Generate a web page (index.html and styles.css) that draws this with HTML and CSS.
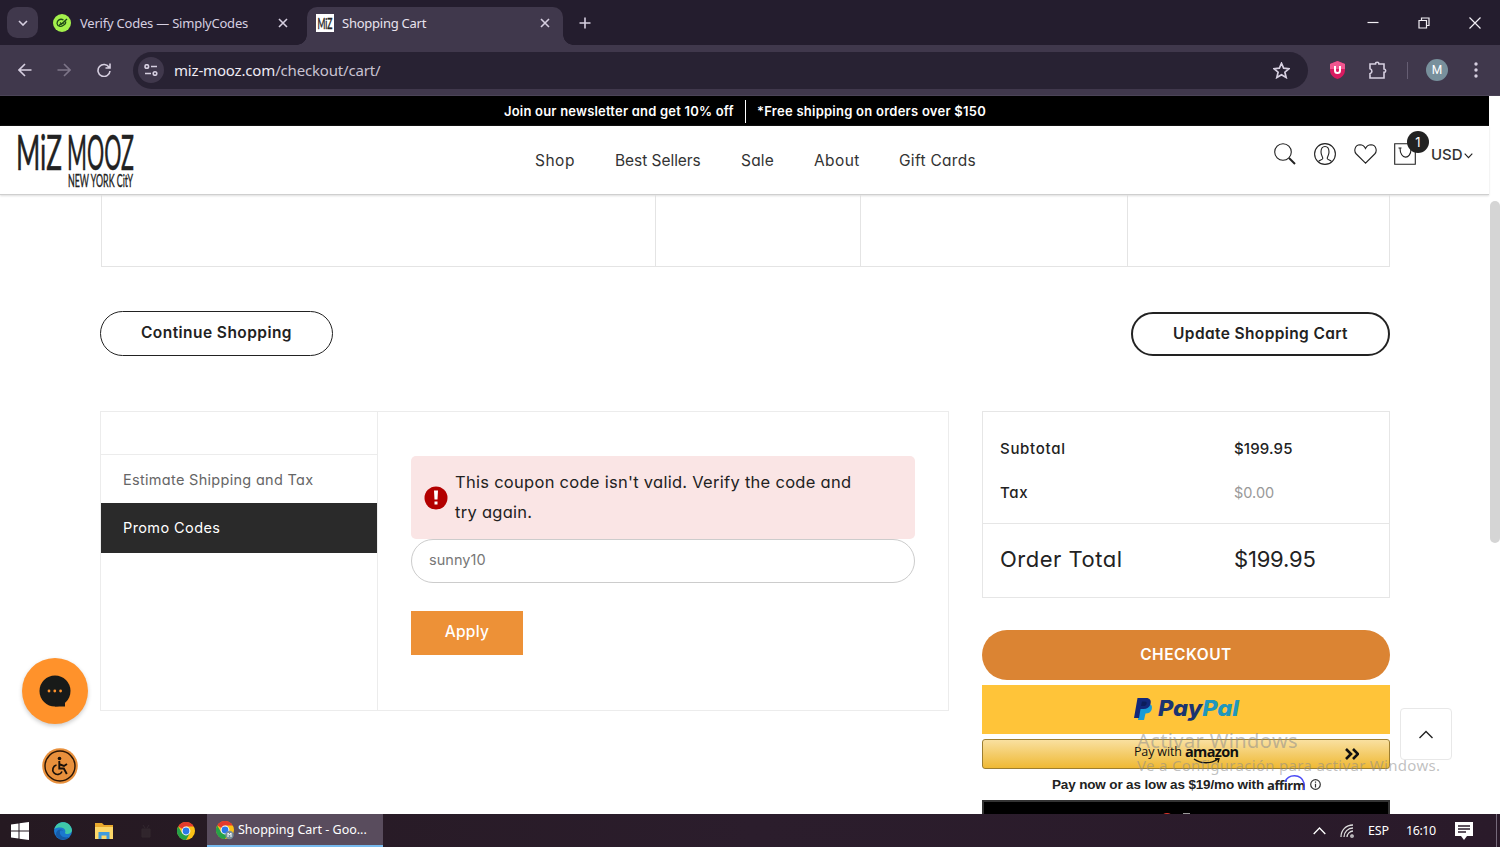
FILE: index.html
```html
<!DOCTYPE html>
<html lang="en">
<head>
<meta charset="utf-8">
<title>Shopping Cart</title>
<link rel="stylesheet" href="styles.css">
</head>
<body>
<svg class="defs" width="0" height="0">
  <symbol id="chrome" viewBox="0 0 18 18">
    <circle cx="9" cy="9" r="9" fill="#fbc116"/>
    <path d="M9 9 1.2 4.5A9 9 0 0 1 16.8 4.5L9 4.6Z" fill="#e33b2e"/>
    <path d="M1.2 4.5A9 9 0 0 0 9 18L12.8 11.2 9 13 5.2 11.2Z" fill="#26a148"/>
    <circle cx="9" cy="9" r="4.4" fill="#fff"/><circle cx="9" cy="9" r="3.4" fill="#2b79e8"/>
  </symbol>
</svg>
<div class="tabs">
  <div class="tab-search"><svg width="10" height="6" viewBox="0 0 10 6"><path d="m1 1 4 4 4-4"/></svg></div>
  <div class="tab tab-one">
    <svg class="fav" viewBox="0 0 18 18"><circle cx="9" cy="9" r="9" fill="#a4f14c"/><path d="M10.500 6C7 4 4 6.500 4 9.500c.5 3 4 3.500 6 2 2-1 3-2.500 2.500-4M7 8.500l1.500 1.500L14 5M6 11l5-2" fill="none" stroke="#1e4a17" stroke-width="1.300"/></svg>
    <span class="tx tab-a">Verify Codes — SimplyCodes</span>
    <svg class="x" viewBox="0 0 10 10"><path d="m1 1 8 8M9 1 1 9"/></svg>
  </div>
  <div class="tab tab-two">
    <svg class="fav" viewBox="0 0 18 18"><path fill="#fff" d="M0 0h18v18H0z"/><text x="1.500" y="14.500" textLength="15" lengthAdjust="spacingAndGlyphs" font-family="Lato" font-size="15" fill="#222" stroke="#222" stroke-width=".4">MiZ</text></svg>
    <span class="tx tab-b">Shopping Cart</span>
    <svg class="x" viewBox="0 0 10 10"><path d="m1 1 8 8M9 1 1 9"/></svg>
  </div>
  <svg class="plus" viewBox="0 0 12 12"><path d="M6 .5v11M.5 6h11"/></svg>
  <div class="win">
    <svg width="12" height="12" viewBox="0 0 12 12"><path d="M.5 5.500h11"/></svg>
    <svg width="12" height="12" viewBox="0 0 12 12"><path d="M1 3.500h7.500V11H1zM3.500 3.500V1H11v7.500H8.500"/></svg>
    <svg width="12" height="12" viewBox="0 0 12 12"><path d="m.5.500 11 11m0-11-11 11"/></svg>
  </div>
</div>
<div class="toolbar">
  <svg class="nav-i back" viewBox="0 0 14 14"><path d="M13.500 7H1.500M7 1 1 7l6 6"/></svg>
  <svg class="nav-i fwd" viewBox="0 0 14 14"><path d="M.5 7h12M7 1l6 6-6 6"/></svg>
  <svg class="nav-i" viewBox="0 0 14 14"><path d="M12.200 4.500A6 6 0 1 0 13 8M13 .5V5H8.500"/></svg>
  <div class="omni">
    <div class="site"><svg width="14" height="12" viewBox="0 0 14 12"><circle cx="2.800" cy="2.500" r="1.800"/><path d="M7 2.500h6M1 9.500h6"/><circle cx="11" cy="9.500" r="1.800"/></svg></div>
    <span class="tx url"><b>miz-mooz.com</b>/checkout/cart/</span>
    <svg class="star" viewBox="0 0 16 16"><path d="m8 1.200 2 4.600 5 .5-3.800 3.300 1.200 5L8 12l-4.400 2.600 1.200-5L1 6.300l5-.5z"/></svg>
  </div>
  <svg class="shield" viewBox="0 0 15 18"><path d="M7.500 0 15 3v6c0 5-4 8-7.500 9C4 17 0 14 0 9V3z" fill="#d81b60"/><path d="M7.500 0 15 3v5H0V3z" fill="#f0568f"/><path d="M5 5v4.500a2.500 2.500 0 0 0 5 0V5" fill="none" stroke="#fff" stroke-width="2"/></svg>
  <svg class="puzzle" viewBox="0 0 18 18"><path d="M1 3h5.500a1.700 1.700 0 0 1 3.400 0H15v5a1.700 1.700 0 0 1 0 3.400V17H1v-4.300a2.600 2.600 0 0 0 0-5z"/></svg>
  <i class="sep"></i>
  <div class="avatar">M</div>
  <svg class="dots" viewBox="0 0 4 16"><circle cx="2" cy="2" r="1.700"/><circle cx="2" cy="8" r="1.700"/><circle cx="2" cy="14" r="1.700"/></svg>
</div>

<div class="view">
<div class="page">
  <div class="banner"><span class="tx ban-a">Join our newsletter and get 10% off</span><i></i><span class="tx ban-b">*Free shipping on orders over $150</span></div>
  <header class="head">
    <svg class="logo" width="118" height="56" viewBox="0 0 118 56">
      <text x="0" y="37.500" textLength="46" lengthAdjust="spacingAndGlyphs" class="logo-big">MiZ</text>
      <text x="51" y="37.500" textLength="67" lengthAdjust="spacingAndGlyphs" class="logo-big">MOOZ</text>
      <text x="52" y="54.500" textLength="65" lengthAdjust="spacingAndGlyphs" class="logo-small">NEW YORK CitY</text>
    </svg>
    <nav class="menu">
      <span class="tx m1">Shop</span><span class="tx m2">Best Sellers</span><span class="tx m3">Sale</span><span class="tx m4">About</span><span class="tx m5">Gift Cards</span>
    </nav>
    <div class="tools">
      <svg width="22" height="22" viewBox="0 0 22 22"><circle cx="9" cy="9" r="8.300"/><path d="m15 15 6 6" stroke-width="2"/></svg>
      <svg width="22" height="22" viewBox="0 0 22 22"><circle cx="11" cy="11" r="10.400"/><path d="M4.500 18.500c1-1.500 4-1.500 4.300-3 .2-1.500-1.800-3-1.800-6.500C7 5.500 8.500 3.500 11 3.500S15 5.500 15 9c0 3.500-2 5-1.800 6.500.3 1.500 3.300 1.500 4.300 3"/></svg>
      <svg width="23" height="20" viewBox="0 0 23 20"><path d="M11.500 19.200 2.300 10C-.5 7 .8 1 6 .8c3 0 4.500 1.700 5.500 3.700C12.500 2.500 14 .8 17 .8c5.200.2 6.500 6.200 3.700 9.200z"/></svg>
      <div class="bag"><svg width="22" height="22" viewBox="0 0 22 22"><path d="M.7.700h20.600v20.600H.7zM4.500 5h3M6 5c0 12 11 12 11 1"/></svg><b>1</b></div>
      <span class="tx usd">USD</span>
      <svg class="chev" width="9" height="6" viewBox="0 0 9 6"><path d="m.7.700 3.800 4L8.300.7"/></svg>
    </div>
  </header>
  <main>
    <div class="cells"><i></i><i></i><i></i><i></i></div>
    <div class="actions">
      <button class="pill"><span class="tx cont">Continue Shopping</span></button>
      <button class="pill thick"><span class="tx upd">Update Shopping Cart</span></button>
    </div>
    <div class="cols">
      <section class="promo">
        <ul>
          <li class="blank"></li>
          <li><span class="tx est">Estimate Shipping and Tax</span></li>
          <li class="on"><span class="tx pro">Promo Codes</span></li>
        </ul>
        <div class="form">
          <div class="alert"><svg width="24" height="24" viewBox="0 0 24 24"><circle cx="12" cy="12" r="11.500" fill="#b30000"/><path d="M10 4.500h4l-.5 9h-3zM10.500 15.500h3v3h-3z" fill="#fff"/></svg>
            <p><span class="tx al">This coupon code isn't valid. Verify the code and</span><br><span class="tx al">try again.</span></p></div>
          <div class="input"><span class="tx inp">sunny10</span></div>
          <button class="apply"><span class="tx app">Apply</span></button>
        </div>
      </section>
      <aside>
        <div class="totals">
          <div class="row"><span><span class="tx sub">Subtotal</span></span><span><span class="tx s1">$199.95</span></span></div>
          <div class="row"><span><span class="tx tax">Tax</span></span><span class="dim"><span class="tx s2">$0.00</span></span></div>
          <div class="row grand"><span><span class="tx ord">Order Total</span></span><span><span class="tx s3">$199.95</span></span></div>
        </div>
        <button class="checkout"><span class="tx chk">CHECKOUT</span></button>
        <div class="paypal">
          <svg width="19" height="22" viewBox="0 0 19 22"><path d="M6 6h9c3 .5 3.500 3 2.500 6-1 2.500-3 3.500-6 3.500L10 22H4z" fill="#179bd7"/><path d="M3.500 0H12c4 0 5.500 2.500 4.500 6-1 3.500-3.500 5-7 5H6.500L5 20H0z" fill="#12287a"/><path d="M8 3.500h3c1.500 0 2 1 1.500 2.500S11 8 9.500 8H7z" fill="#0b1d5c"/></svg>
          <svg class="pp" width="83" height="26" viewBox="0 0 83 26"><text x="0" y="19.500" textLength="81" lengthAdjust="spacingAndGlyphs">Pay<tspan>Pal</tspan></text></svg>
        </div>
        <div class="amazon"><span class="tx az1">Pay with</span><span class="az"><span class="tx az2">amazon</span><svg width="30" height="8" viewBox="0 0 30 8"><path d="M1 1c7 5 17 5 24 0M22 .8l4-.3-1 4"/></svg></span>
          <svg class="dbl" width="14" height="12" viewBox="0 0 14 12"><path d="m1 1 5 5-5 5m7-10 5 5-5 5"/></svg></div>
        <div class="affirm"><span class="tx af1">Pay now or as low as $19/mo with</span><span class="af"><span class="tx af2">affirm</span><svg width="22" height="16" viewBox="0 0 22 16"><path d="M1 7C4-1 17-2 20 8c.5 2 0 5-.5 7"/></svg></span>
          <svg class="info" width="11" height="11" viewBox="0 0 11 11"><circle cx="5.500" cy="5.500" r="4.800"/><path d="M5.500 2.500v1.300m0 1v3.700"/></svg></div>
        <div class="black"><i></i><b></b></div>
      </aside>
    </div>
  </main>
</div>
<div class="scroll"><i></i></div>
<div class="chat"><svg width="32" height="32" viewBox="0 0 32 32"><circle cx="16" cy="16" r="15.500" fill="#181a19"/><path d="M18 24h8v7.500H16z" fill="#181a19"/><g fill="#ff922b"><circle cx="10" cy="16" r="1.400"/><circle cx="15.800" cy="16" r="1.400"/><circle cx="21.600" cy="16" r="1.400"/></g></svg></div>
<div class="access"><svg width="36" height="36" viewBox="0 0 36 36"><circle cx="18" cy="18" r="17.800" fill="#e8903c"/><circle cx="18" cy="18" r="15" fill="none" stroke="#2a1606" stroke-width="1.400"/><circle cx="17.500" cy="10.500" r="1.800" fill="#18100a"/><path d="M17.300 13v7.500h4.500l3 5.500M18 16.500l4 1.500 3-2" fill="none" stroke="#18100a" stroke-width="1.900"/><path d="M14.500 17a4.800 4.800 0 1 0 5.500 6.500" fill="none" stroke="#18100a" stroke-width="1.700"/></svg></div>
<div class="top"><svg width="16" height="9" viewBox="0 0 16 9"><path d="m1.500 8 6.500-6.500L14.500 8"/></svg></div>
<div class="mark"><p><span class="tx w1">Activar Windows</span></p><p class="sm"><span class="tx w2">Ve a Configuración para activar Windows.</span></p></div>
</div>

<div class="task">
  <svg class="start" viewBox="0 0 18 18"><path d="M0 2.500 7.500 1.500V8.500H0zM8.500 1.300 18 0V8.500H8.500zM0 9.500H7.500V16.500L0 15.500zM8.500 9.500H18V18L8.500 16.700z"/></svg>
  <svg class="t2" viewBox="0 0 18 18"><circle cx="9" cy="9" r="9" fill="#1b78cf"/><path d="M.5 7C2-1.500 16-3 18 8c0 4-6 5-7 3 2-5-5-7-10.500-4" fill="#3fc8a9"/><path d="M6 9c-1 5 4 7.500 9 6-5 5-13 2-13-3 0-4 5-6 7-3-1.500-1-2.500-1-3 0" fill="#155ba8"/></svg>
  <svg class="t3" viewBox="0 0 18 16"><path d="M0 0h7l2 2h9v4H0z" fill="#e8a92d"/><path d="M0 4h18v12H0z" fill="#fbd768"/><path d="M3.500 16V9h11v7h-3v-3.500h-5V16z" fill="#3f9bdc"/></svg>
  <svg class="t4" viewBox="0 0 12 14"><path d="M2 5h8v8H2zM3 1l2 3m4-3L7 4" /></svg>
  <svg class="t5"><use href="#chrome"/></svg>
  <div class="active"><svg><use href="#chrome"/><circle cx="13.500" cy="14" r="4.200" fill="#78909c"/><path d="M12 16v-4l1.500 2 1.500-2v4" fill="none" stroke="#fff"/></svg><span class="tx tk">Shopping Cart - Goo...</span></div>
  <div class="tray">
    <svg width="13" height="8" viewBox="0 0 13 8"><path d="M.7 7 6.500 1l5.800 6"/></svg>
    <svg class="wifi" width="14" height="15" viewBox="0 0 14 15"><path d="M1 14C1 7 6 2 13 2M4 14c0-5 4-9 9-9M7 14c0-3 3-6 6-6"/><circle cx="12" cy="13" r="1.200"/></svg>
    <span class="tx esp">ESP</span><span class="tx clk">16:10</span>
    <svg class="note" width="18" height="18" viewBox="0 0 18 18"><path d="M0 0h18v14h-6l-3 4-3-4H0z" fill="#fff"/><path d="M3 4h12M3 7h12M3 10h8" stroke="#2b1d2c"/></svg>
    <i class="edge"></i>
  </div>
</div>
</body>
</html>
```
FILE: styles.css
```css
* { box-sizing: border-box; }
body { margin: 0; width: 1500px; height: 847px; overflow: hidden; display: flex; flex-direction: column; font-family: Inter, "Open Sans", sans-serif; font-feature-settings: "cv11"; color: #222; background: #fff; }
i { display: block; }
p, ul { margin: 0; padding: 0; list-style: none; }
button { font: inherit; color: inherit; padding: 0; border: 0; display: flex; align-items: center; justify-content: center; }
svg { flex: none; display: block; fill: none; }
.defs { position: absolute; }
.tx { white-space: nowrap; }

.tabs { height: 45px; background: #241d2e; display: flex; align-items: center; font: 13px "Noto Sans", sans-serif; color: #d6cfe0; }
.tabs svg, .toolbar svg { stroke: #d6cfe0; stroke-width: 1.6; }
.tabs .fav { width: 18px; height: 18px; stroke: none; overflow: visible; }
.tab-a { letter-spacing: -.22px; }
.tab-b { letter-spacing: -.25px; }
.tab-search { width: 31px; height: 31px; margin-left: 7px; border-radius: 10px; background: #40384c; display: flex; align-items: center; justify-content: center; }
.tab { display: flex; align-items: center; }
.tab .x { width: 10px; height: 10px; margin-left: auto; }
.tab-one { width: 269px; padding: 0 19px 0 15px; gap: 9px; }
.tab-two { width: 256px; height: 38px; margin-top: 7px; padding: 0 13px 6px 9px; gap: 8px; background: #40384c; border-radius: 10px 10px 0 0; color: #e8e3ee; position: relative; }
.tab-two::before, .tab-two::after { content: ""; position: absolute; bottom: 0; width: 10px; height: 10px; }
.tab-two::before { left: -10px; background: radial-gradient(circle at 0 0, #241d2e 9.5px, #40384c 10px); }
.tab-two::after { right: -10px; background: radial-gradient(circle at 100% 0, #241d2e 9.5px, #40384c 10px); }
.plus { width: 12px; height: 12px; margin-left: 16px; }
.win { margin: 0 19px 0 auto; display: flex; gap: 39px; }
.tabs .win svg { stroke: #f2eff5; stroke-width: 1.2; }

.toolbar { height: 51px; padding-left: 18px; background: #40384c; border-bottom: 1px solid #4b4457; display: flex; align-items: center; }
.nav-i { width: 14px; height: 14px; margin-right: 25px; }
.toolbar .fwd { stroke: #7d7588; }
.back + .fwd { margin-right: 26px; }
.omni { width: 1175px; height: 37px; margin-left: -3px; border-radius: 19px; background: #282233; display: flex; align-items: center; padding: 0 18px 0 5px; }
.site { width: 26px; height: 26px; border-radius: 50%; background: #40384c; display: flex; align-items: center; justify-content: center; }
.url { margin-left: 10px; font: 15px "Noto Sans", sans-serif; letter-spacing: -.17px; color: #c9c2d2; }
.url b { font-weight: 400; color: #eeeaf3; }
.star { width: 17px; height: 17px; margin-left: auto; }
.toolbar .shield { width: 15px; height: 18px; margin-left: 22px; stroke: none; }
.puzzle { width: 18px; height: 18px; margin-left: 24px; }
.sep { width: 1px; height: 17px; margin-left: 20px; background: #665e73; }
.avatar { width: 22px; height: 22px; margin-left: 18px; border-radius: 50%; background: #78909c; color: #fff; font: 12px/22px Roboto, sans-serif; text-align: center; }
.toolbar .dots { width: 4px; height: 16px; margin-left: 26px; fill: #d6cfe0; stroke: none; }

.view { height: 718px; position: relative; display: flex; overflow: hidden; }
.page { width: 1489px; }
.banner { height: 30px; background: #000; color: #fff; font-size: 13px; font-weight: 600; display: flex; align-items: center; padding-left: 504px; }
.banner i { width: 1px; height: 23px; background: #fff; margin: 0 11px 0 12px; }
.ban-a { width: 229px; letter-spacing: .2px; }
.ban-b { letter-spacing: .25px; }
.head { height: 69px; display: flex; position: relative; border-bottom: 1px solid #cfcfcf; box-shadow: 0 1px 2px #ddd; font-size: 15.5px; color: #333; }
.logo { margin: 6px 0 0 16px; overflow: visible; }
.logo-big { font: 400 49px Lato, sans-serif; fill: #222; stroke: #222; stroke-width: .5; }
.logo-small { font: 400 18px Lato, sans-serif; fill: #222; stroke: #222; stroke-width: .4; }
.menu { display: flex; margin-left: 401px; height: 69px; align-items: center; }
.menu .m1 { width: 80px; letter-spacing: .5px; }
.menu .m2 { width: 126px; letter-spacing: -.05px; }
.menu .m3 { width: 73px; letter-spacing: .2px; }
.menu .m4 { width: 85px; letter-spacing: .4px; }
.menu .m5 { width: 78px; letter-spacing: .3px; }
.tools { margin-left: auto; margin-right: 16px; display: flex; align-items: center; height: 56px; gap: 18px; }
.tools svg { stroke: #222; stroke-width: 1.1; }
.bag { position: relative; margin-left: -1px; }
.bag b { position: absolute; left: 13px; top: -12px; width: 22px; height: 22px; border-radius: 50%; background: #222; color: #fff; font: 13px/22px Inter, sans-serif; text-align: center; }
.usd { width: 31px; margin-left: -3px; font-size: 15px; font-weight: 500; }
.tools .chev { margin: 3px 0 0 -16px; }

main { padding: 0 99px 0 100px; }
.cells { height: 72px; margin: 0 0 0 1px; display: grid; grid-template-columns: 554px 205px 267px 1fr; border: solid #e4e4e4; border-width: 0 0 1px 1px; }
.cells i { border-right: 1px solid #e4e4e4; }
.actions { display: flex; justify-content: space-between; margin-top: 44px; }
.pill { width: 233px; height: 45px; border: 1px solid #222; border-radius: 23px; background: #fff; font-size: 15.5px; font-weight: 600; padding-bottom: 3px; }
.thick { width: 259px; border-width: 2px; height: 44px; margin-top: 1px; padding-bottom: 2px; }
.cont { letter-spacing: .44px; }
.upd { letter-spacing: .38px; }
.cols { display: flex; gap: 33px; margin-top: 55px; align-items: flex-start; }
.promo { width: 849px; height: 300px; border: 1px solid #ececec; display: flex; }
.promo ul { width: 277px; border-right: 1px solid #ececec; font-size: 14.5px; color: #666; }
.promo li { height: 48px; padding-left: 22px; display: flex; align-items: center; }
.promo .blank { height: 43px; border-bottom: 1px solid #ececec; }
.promo .on { height: 50px; background: #2a2a2a; color: #fff; padding-bottom: 1px; }
.est { letter-spacing: .3px; }
.pro { letter-spacing: .4px; }
.form { padding: 44px 33px; flex: 1; }
.alert { height: 83px; border-radius: 5px; background: #fae5e5; display: flex; align-items: center; gap: 7px; padding-left: 13px; font-size: 16.5px; line-height: 30px; }
.alert p { padding-bottom: 2px; }
.al { letter-spacing: .28px; }
.input { height: 44px; border: 1px solid #ccc; border-radius: 22px; padding-left: 17px; display: flex; align-items: center; font-size: 14.5px; color: #777; padding-bottom: 3px; }
.inp { letter-spacing: .05px; }
.apply { width: 112px; height: 44px; margin-top: 28px; background: #ed9137; color: #fff; font-size: 15.5px; font-weight: 500; padding-bottom: 3px; }
.app { letter-spacing: .3px; }
aside { width: 408px; }
.totals { height: 187px; border: 1px solid #e6e6e6; padding-top: 14px; font-size: 15px; font-weight: 500; }
.row { height: 44px; display: grid; grid-template-columns: 234px 1fr; align-items: center; padding-left: 17px; }
.sub, .tax { letter-spacing: .7px; }
.s1 { letter-spacing: .15px; }
.dim { color: #999; font-weight: 400; font-size: 14.5px; }
.grand { height: 73px; margin-top: 9px; border-top: 1px solid #e6e6e6; font-size: 22px; font-weight: 400; padding-bottom: 2px; }
.ord { letter-spacing: .5px; }
.s3 { letter-spacing: -.2px; }
.checkout { width: 100%; height: 50px; margin-top: 32px; border-radius: 25px; background: #db8433; color: #fff; font-size: 15.5px; font-weight: 600; padding-bottom: 2px; letter-spacing: .5px; }
.paypal { height: 49px; margin-top: 5px; background: #ffc439; display: flex; align-items: center; padding: 0 0 1px 152px; gap: 5px; }
.pp { font: italic 800 22px Inter, sans-serif; fill: #1b3470; overflow: visible; }
.pp tspan { fill: #1f97bd; }
.amazon { height: 30px; margin-top: 5px; border: 1px solid #9c7e31; border-radius: 3px; background: linear-gradient(#f9e0a0, #efb934); display: flex; align-items: center; padding: 0 31px 5px 151px; gap: 4px; font: 500 12.5px "Open Sans", sans-serif; color: #111; }
.az1 { width: 47px; letter-spacing: -.15px; }
.az { font-weight: 700; font-size: 14.5px; letter-spacing: -.65px; position: relative; }
.az svg { position: absolute; left: 8px; top: 16px; stroke: #111; stroke-width: 1.4; }
.dbl { margin: 4px -1px 0 auto; stroke: #111; stroke-width: 2.6; }
.affirm { height: 31px; display: flex; align-items: center; padding-left: 70px; font: 700 13.5px "Liberation Sans", sans-serif; }
.af1 { width: 212px; letter-spacing: -.15px; }
.af { position: relative; margin-left: 3px; font: 700 13px "Open Sans", sans-serif; letter-spacing: -.4px; }
.af svg { position: absolute; left: 17px; top: -1px; stroke: #4a4af4; stroke-width: 1.4; }
.info { margin-left: 5px; stroke: #333; stroke-width: 1.2; }
.black { height: 40px; background: #000; border: 2px solid #333; position: relative; overflow: hidden; }
.black i, .black b { position: absolute; top: 11px; }
.black i { left: 176px; width: 14px; height: 14px; border-radius: 50%; background: #e0352b; }
.black b { left: 199px; width: 7px; height: 3px; background: #999; }

.scroll { width: 11px; padding: 105px 0 0 1px; background: #fff; }
.scroll i { height: 342px; border-radius: 5px; background: #d5d5d5; }
.chat { position: absolute; left: 22px; top: 562px; width: 66px; height: 66px; border-radius: 50%; background: #ff922b; box-shadow: 0 2px 4px #ccc; display: flex; align-items: center; justify-content: center; }
.access { position: absolute; left: 42px; top: 652px; }
.top { position: absolute; left: 1400px; top: 612px; width: 52px; height: 52px; border: 1px solid #e8e8e8; border-radius: 4px; background: #fff; display: flex; align-items: center; justify-content: center; }
.top svg { stroke: #222; stroke-width: 1.4; }
.mark { position: absolute; left: 1137px; top: 631px; color: rgba(140, 140, 140, .55); font: 20px/28px "Noto Sans", sans-serif; }
.w1 { letter-spacing: .4px; }
.sm { font-size: 15px; line-height: 20px; letter-spacing: .3px; }

.task { height: 33px; background: linear-gradient(90deg, #251921, #2b1d2c 50%, #2a1a2a); display: flex; align-items: center; font: 12.5px "Noto Sans", sans-serif; color: #fff; }
.start { width: 18px; height: 18px; margin-left: 11px; fill: #fff; }
.t2, .t5 { width: 18px; height: 18px; margin-left: 25px; }
.t3 { width: 18px; height: 16px; margin-left: 23px; }
.t4 { width: 12px; height: 14px; margin-left: 27px; stroke: #33282f; fill: #30252c; }
.active { width: 176px; height: 33px; margin-left: 12px; background: #594c5d; border-bottom: 2px solid #76b9ed; display: flex; align-items: center; padding-left: 9px; gap: 4px; }
.active svg { width: 18px; height: 18px; overflow: visible; }
.tray { margin-left: auto; display: flex; align-items: center; padding-right: 3px; }
.tray svg { stroke: #fff; stroke-width: 1.3; }
.tray .wifi { margin: 0 14px; stroke: #ddd; }
.esp { width: 21px; margin-right: 17px; letter-spacing: -.2px; }
.clk { width: 30px; margin-right: 19px; letter-spacing: -.45px; }
.tray .note { stroke: none; }
.edge { width: 1px; height: 33px; margin-left: 23px; background: #75697a; }
```
